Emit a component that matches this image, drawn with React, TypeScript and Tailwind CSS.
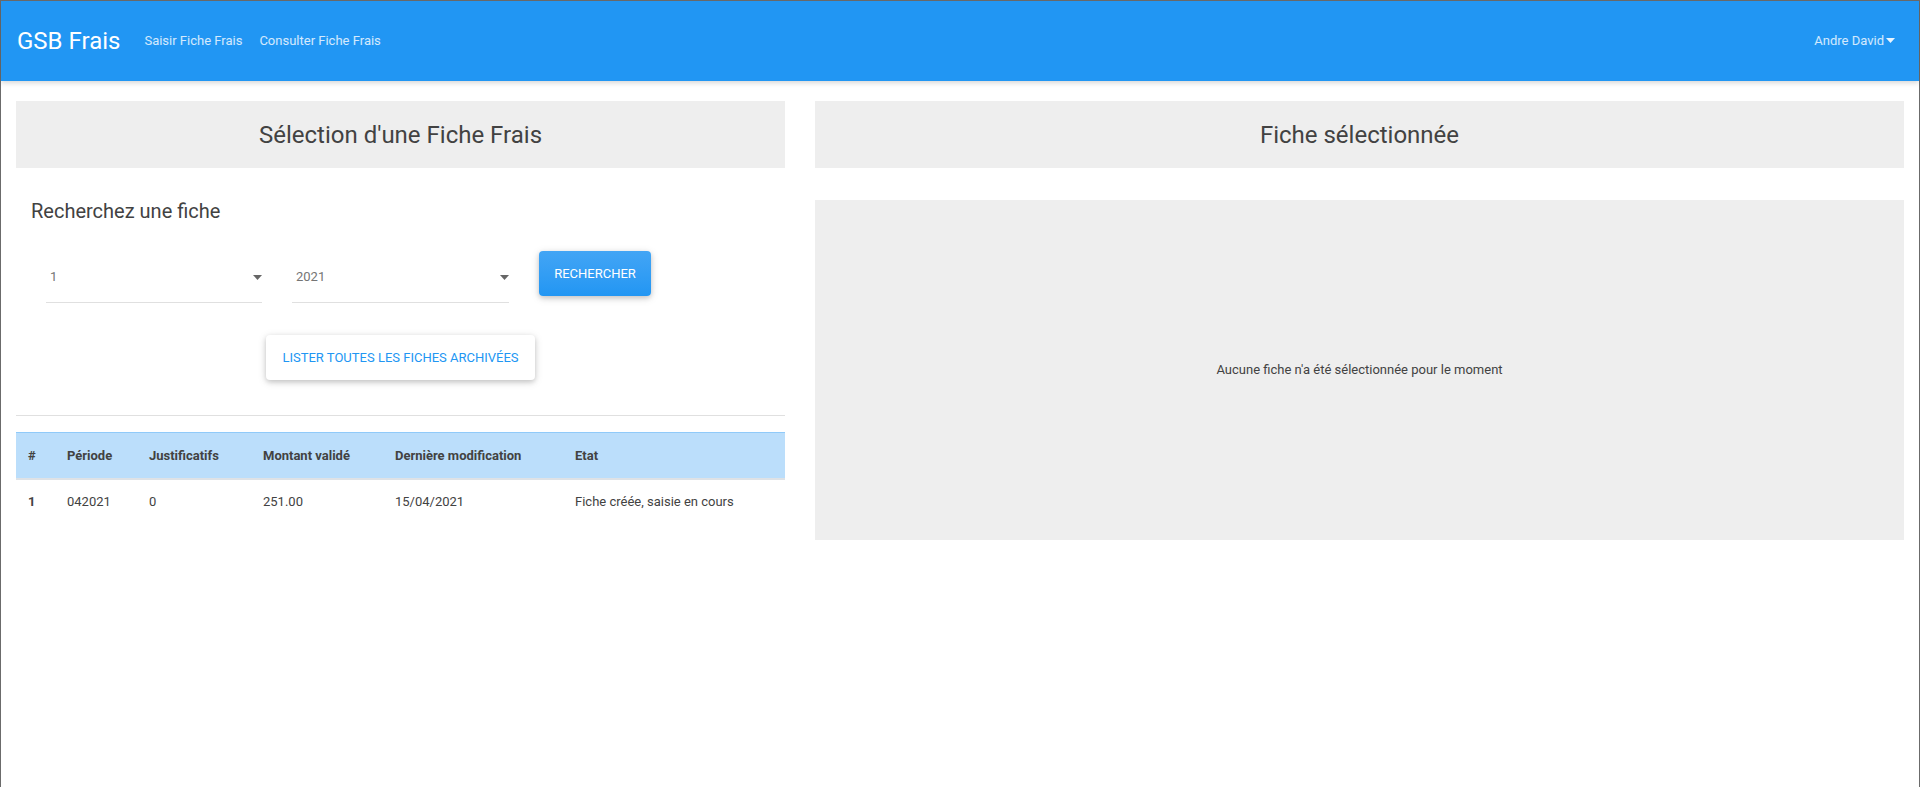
import { useState } from "react";

interface Fiche {
  id: number;
  periode: string;
  justificatifs: number;
  montant: string;
  modification: string;
  etat: string;
}

const fiches: Fiche[] = [
  {
    id: 1,
    periode: "042021",
    justificatifs: 0,
    montant: "251.00",
    modification: "15/04/2021",
    etat: "Fiche créée, saisie en cours",
  },
];

function Caret({ className = "" }: { className?: string }) {
  return (
    <svg width="9" height="5" viewBox="0 0 9 5" className={className}>
      <path d="M0 0h9L4.5 5z" fill="currentColor" />
    </svg>
  );
}

function SelectField({ value, width }: { value: string; width: string }) {
  return (
    <div className={`${width} mt-[18px] flex items-center justify-between border-b border-[#e0e0e0] pb-[17px] pl-[4px] pr-[0px]`}>
      <span className="text-[13px] leading-[16px] text-[#757575]">{value}</span>
      <Caret className="text-[#666666]" />
    </div>
  );
}

export default function App() {
  const [mois] = useState("1");
  const [annee] = useState("2021");

  return (
    <div className="min-h-[787px] w-[1920px] border-x border-t border-[#6b6b6b] bg-white font-['Roboto','Liberation_Sans',sans-serif] text-[#424242]">
      <nav className="flex h-[80px] items-center bg-[#2196f3] pl-[16px] pr-[24px] shadow-[0_2px_5px_rgba(0,0,0,0.16)]">
        <a className="text-[24px] leading-none text-white">GSB Frais</a>
        <div className="ml-[24px] flex items-center gap-[17px] text-[13px] text-white/80">
          <a>Saisir Fiche Frais</a>
          <a>Consulter Fiche Frais</a>
        </div>
        <div className="ml-auto flex items-center gap-[2px] text-[13px] text-white/80">
          <span>Andre David</span>
          <Caret className="mb-[2px] text-white/90" />
        </div>
      </nav>

      <main className="flex gap-[30px] px-[15px] pt-[20px]">
        {/* colonne gauche : sélection */}
        <section className="w-[769px] shrink-0">
          <div className="flex h-[67px] items-center justify-center bg-[#eeeeee] text-[24px]">
            Sélection d'une Fiche Frais
          </div>

          <h5 className="mt-[31px] pl-[15px] text-[20px] leading-[24px]">Recherchez une fiche</h5>

          <div className="mt-[28px] flex items-start gap-[30px] pl-[30px]">
            <SelectField value={mois} width="w-[216px]" />
            <SelectField value={annee} width="w-[217px]" />
            <button className="h-[45px] w-[112px] rounded-[4px] bg-gradient-to-b from-[#42a5f5] to-[#2196f3] text-[13px] text-white uppercase shadow-[0_2px_5px_rgba(0,0,0,0.16),0_2px_10px_rgba(0,0,0,0.12)]">
              Rechercher
            </button>
          </div>

          <div className="mt-[32px] flex justify-center">
            <button className="h-[45px] w-[269px] rounded-[4px] bg-white text-[13px] text-[#2196f3] uppercase shadow-[0_2px_5px_rgba(0,0,0,0.16),0_2px_10px_rgba(0,0,0,0.12)]">
              Lister toutes les fiches archivées
            </button>
          </div>

          <hr className="mt-[35px] border-[#e0e0e0]" />

          <table className="mt-[16px] w-full table-fixed border-collapse text-left text-[13px]">
            <thead>
              <tr className="h-[46px] border-t border-b-2 border-t-[#90caf9] border-b-[#dee2e6] bg-[#bbdefb]">
                <th className="w-[39px] px-[12px] font-bold">#</th>
                <th className="w-[82px] px-[12px] font-bold">Période</th>
                <th className="w-[114px] px-[12px] font-bold">Justificatifs</th>
                <th className="w-[132px] px-[12px] font-bold">Montant validé</th>
                <th className="w-[180px] px-[12px] font-bold">Dernière modification</th>
                <th className="px-[12px] font-bold">Etat</th>
              </tr>
            </thead>
            <tbody>
              {fiches.map((f) => (
                <tr key={f.id} className="h-[46px]">
                  <td className="px-[12px] font-bold">{f.id}</td>
                  <td className="px-[12px]">{f.periode}</td>
                  <td className="px-[12px]">{f.justificatifs}</td>
                  <td className="px-[12px]">{f.montant}</td>
                  <td className="px-[12px]">{f.modification}</td>
                  <td className="px-[12px]">{f.etat}</td>
                </tr>
              ))}
            </tbody>
          </table>
        </section>

        {/* colonne droite : fiche sélectionnée */}
        <section className="flex-1">
          <div className="flex h-[67px] items-center justify-center bg-[#eeeeee] text-[24px]">
            Fiche sélectionnée
          </div>
          <div className="mt-[32px] flex h-[340px] items-center justify-center bg-[#eeeeee] text-[13px]">
            Aucune fiche n'a été sélectionnée pour le moment
          </div>
        </section>
      </main>
    </div>
  );
}
